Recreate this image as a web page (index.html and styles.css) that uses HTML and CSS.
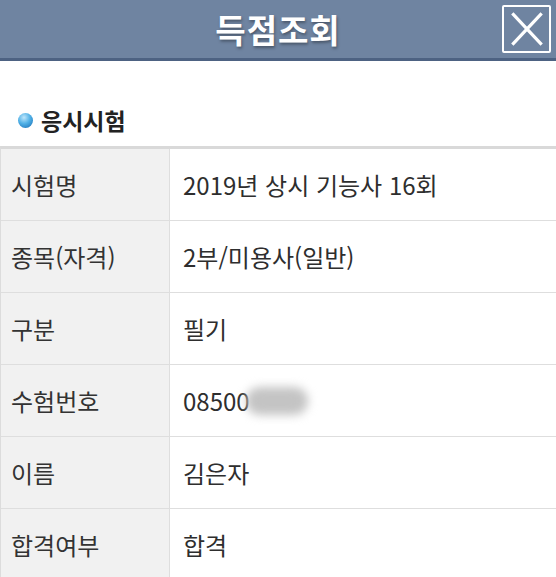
FILE: index.html
```html
<!DOCTYPE html>
<html lang="ko">
<head>
<meta charset="utf-8">
<link rel="stylesheet" href="styles.css">
</head>
<body>
<header class="topbar">
  <h1 class="title">득점조회</h1>
  <button class="close" aria-label="닫기">
    <svg viewBox="0 0 48 48" width="44" height="44"><path d="M8 7 L40 41 M40 7 L8 41" stroke="#fff" stroke-width="3.5" fill="none"/></svg>
  </button>
</header>
<section class="section">
  <h2 class="sec-title"><span class="dot"></span>응시시험</h2>
  <div class="table">
    <div class="row"><div class="label">시험명</div><div class="value">2019년 상시 기능사 16회</div></div>
    <div class="row"><div class="label">종목(자격)</div><div class="value">2부/미용사(일반)</div></div>
    <div class="row"><div class="label">구분</div><div class="value">필기</div></div>
    <div class="row"><div class="label">수험번호</div><div class="value">08500<span class="blur"></span></div></div>
    <div class="row"><div class="label">이름</div><div class="value">김은자</div></div>
    <div class="row"><div class="label">합격여부</div><div class="value">합격</div></div>
  </div>
</section>
</body>
</html>
```
FILE: styles.css
```css
html, body {
  margin: 0;
  padding: 0;
  background: #fff;
  overflow: hidden;
  font-family: "Noto Sans CJK KR", "Noto Sans", sans-serif;
}
.topbar {
  height: 58px;
  background: #6f84a1;
  border-bottom: 3px solid #4d6282;
  display: flex;
  align-items: center;
  justify-content: center;
  position: relative;
}
.title {
  margin: 0;
  color: #fff;
  font-size: 33px;
  font-weight: 700;
  letter-spacing: 1px;
  text-shadow: 1px 2px 3px rgba(0,0,0,0.35);
}
.close {
  position: absolute;
  right: 5px;
  top: 5px;
  width: 49px;
  height: 48px;
  padding: 0;
  background: transparent;
  border: 2px solid #fff;
  border-radius: 2px;
  display: flex;
  align-items: center;
  justify-content: center;
}
.section {
  padding-top: 42px;
}
.sec-title {
  margin: 0 0 9px 0;
  padding-left: 18px;
  display: flex;
  align-items: center;
  gap: 8px;
  font-size: 23px;
  font-weight: 700;
  color: #222;
  height: 34px;
}
.dot {
  width: 15px;
  height: 15px;
  border-radius: 50%;
  background: radial-gradient(circle at 40% 30%, #bfe6fb 0%, #4fb0e6 45%, #1567b0 100%);
  margin-top: 1px;
}
.table {
  border-top: 3px solid #d9d9d9;
  border-left: 1px solid #dcdcdc;
}
.row {
  display: flex;
  height: 71px;
  border-bottom: 1px solid #dedede;
}
.label {
  width: 158px;
  padding-left: 10px;
  background: #f1f1f1;
  border-right: 1px solid #dedede;
  display: flex;
  align-items: center;
  font-size: 24px;
  color: #333;
}
.value {
  flex: 1;
  padding-left: 13px;
  display: flex;
  align-items: center;
  font-size: 24px;
  color: #2e2e2e;
}
.blur {
  display: inline-block;
  width: 62px;
  height: 28px;
  margin-left: -4px;
  background: #c4c4c4;
  border-radius: 14px;
  filter: blur(5px);
}
```
